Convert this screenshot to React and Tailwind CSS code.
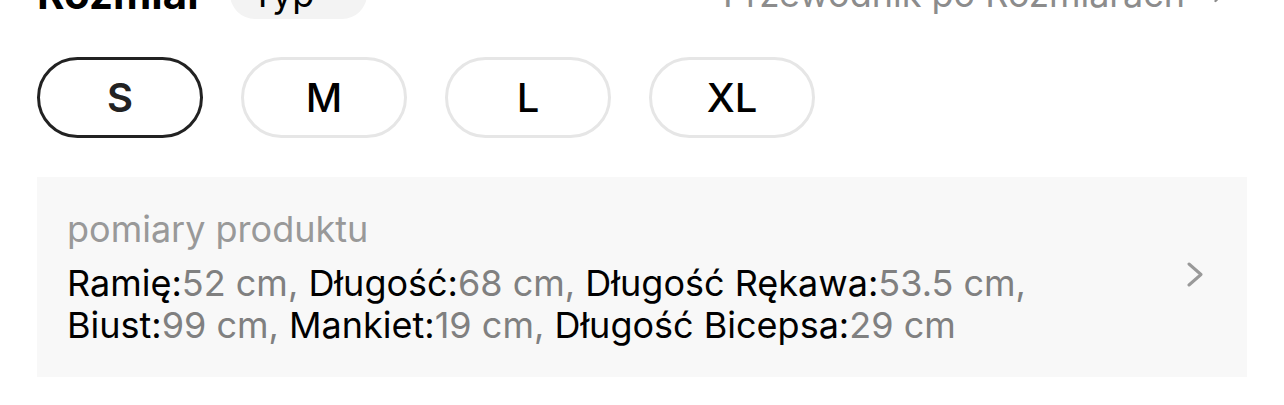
import React from "react";
import { ChevronRight, ChevronDown } from "lucide-react";

const sizes = ["S", "M", "L", "XL"];

const measures = [
  ["Ramię:", "52 cm, "],
  ["Długość:", "68 cm, "],
  ["Długość Rękawa:", "53.5 cm, "],
  ["Biust:", "99 cm, "],
  ["Mankiet:", "19 cm, "],
  ["Długość Bicepsa:", "29 cm"],
];

const App = () => {
  const selected = "S";
  return (
    <div
      className="w-[1284px] h-[405px] overflow-hidden bg-white px-[37px]"
      style={{ fontFamily: "Inter, 'Noto Sans', sans-serif" }}
    >
      {/* Header (scrolled partly out of view) */}
      <div className="-mt-[31px] flex h-[50px] items-center justify-between">
        <div className="flex items-center gap-[26px]">
          <h2 className="text-[42px] font-bold leading-none text-black">Rozmiar</h2>
          <div className="flex h-[50px] w-[137px] items-center justify-center gap-4 rounded-full bg-[#f3f3f3] text-[36px] text-black">
            <span>Typ</span>
            <ChevronDown size={16} className="text-gray-400" />
          </div>
        </div>
        <div className="mr-[14px] flex items-center gap-5 text-[36px] text-[#8c8c8c]">
          <span>Przewodnik po Rozmiarach</span>
          <ChevronRight size={28} />
        </div>
      </div>

      {/* Size buttons */}
      <div className="mt-[38px] flex gap-[38px]">
        {sizes.map((s) => (
          <button
            key={s}
            className={
              s === selected
                ? "flex h-[81px] w-[166px] items-center justify-center rounded-full border-[3px] border-[#222] text-[40px] font-semibold text-[#222]"
                : "flex h-[81px] w-[166px] items-center justify-center rounded-full border-[3px] border-[#e6e6e6] text-[40px] font-medium text-black"
            }
          >
            {s}
          </button>
        ))}
      </div>

      {/* Product measurements */}
      <div className="mt-[39px] flex h-[200px] items-center justify-between bg-[#f8f8f8] pl-[30px] pr-[43px]">
        <div>
          <div className="mb-[12px] text-[36px] leading-[42px] text-[#999]">pomiary produktu</div>
          <div className="w-[1060px] text-[36px] leading-[42px] text-black">
            {measures.map(([k, v], i) => (
              <React.Fragment key={k}>
                <span>{k}</span>
                <span className="text-[#808080]">{v}</span>
                {i === 2 && <br />}
              </React.Fragment>
            ))}
          </div>
        </div>
        <svg width="18" height="25" viewBox="0 0 18 25" fill="none" className="-mt-[6px] text-[#999]">
          <path d="M3 2l12 10.5L3 23" stroke="currentColor" strokeWidth="3" strokeLinecap="round" strokeLinejoin="round" />
        </svg>
      </div>
    </div>
  );
};

export default App;
